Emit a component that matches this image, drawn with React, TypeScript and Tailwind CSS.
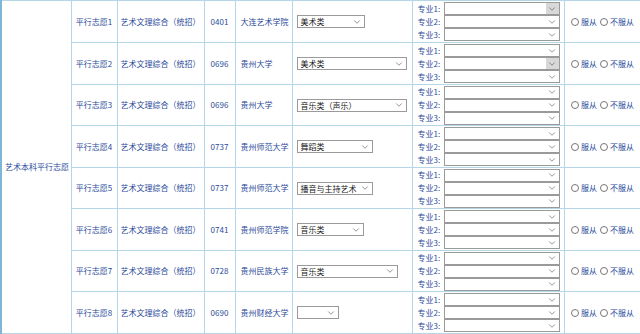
import { FiChevronDown } from "react-icons/fi";

type Row = {
  name: string;
  code: string;
  school: string;
  cat: string;
  selW: string;
  hot?: number;
  h: string;
};

const rows: Row[] = [
  { name: "平行志愿1", code: "0401", school: "大连艺术学院", cat: "美术类", selW: "w-[68px]", hot: 0, h: "h-[42px]" },
  { name: "平行志愿2", code: "0696", school: "贵州大学", cat: "美术类", selW: "w-[110px]", hot: 1, h: "h-[42px]" },
  { name: "平行志愿3", code: "0696", school: "贵州大学", cat: "音乐类（声乐）", selW: "w-[110px]", h: "h-[41px]" },
  { name: "平行志愿4", code: "0737", school: "贵州师范大学", cat: "舞蹈类", selW: "w-[76px]", h: "h-[42px]" },
  { name: "平行志愿5", code: "0737", school: "贵州师范大学", cat: "播音与主持艺术", selW: "w-[76px]", h: "h-[41px]" },
  { name: "平行志愿6", code: "0741", school: "贵州师范学院", cat: "音乐类", selW: "w-[67px]", h: "h-[42px]" },
  { name: "平行志愿7", code: "0728", school: "贵州民族大学", cat: "音乐类", selW: "w-[101px]", h: "h-[41px]" },
  { name: "平行志愿8", code: "0690", school: "贵州财经大学", cat: "", selW: "w-[42px]", h: "h-[42px]" },
];

const cell = "border border-[#b5d6e6] text-center align-middle p-0";

function FakeSelect({ value, width, hot }: { value: string; width: string; hot?: boolean }) {
  return (
    <div className={`flex items-center h-[13px] bg-white border border-[#9a9a9a] ${width}`}>
      <span className="flex-1 pl-[3px] text-left text-[8px] leading-[11px] text-[#222] whitespace-nowrap">
        {value}
      </span>
      <span
        className={`flex items-center justify-center w-[13px] h-full shrink-0 ${hot ? "bg-[#d8d8d8]" : ""}`}
      >
        <FiChevronDown className="w-[10px] h-[10px] text-[#555]" strokeWidth={1.5} />
      </span>
    </div>
  );
}

function Radio({ label }: { label: string }) {
  return (
    <span className="inline-flex items-center gap-[2px]">
      <span className="w-[8px] h-[8px] rounded-full border border-[#777] bg-white" />
      <span>{label}</span>
    </span>
  );
}

export default function App() {
  return (
    <div
      className="w-[640px] h-[334px] bg-white overflow-hidden text-[8px] text-[#2b4a9a]"
      style={{ fontFamily: '"Noto Sans CJK SC", "Noto Sans", sans-serif' }}
    >
      <table className="w-[640px] border-collapse table-fixed border-l-2 border-l-[#7fb6d8]">
        <colgroup>
          <col className="w-[70px]" />
          <col className="w-[46px]" />
          <col className="w-[87px]" />
          <col className="w-[31px]" />
          <col className="w-[57px]" />
          <col className="w-[120px]" />
          <col className="w-[152px]" />
          <col className="w-[77px]" />
        </colgroup>
        <tbody>
          {rows.map((r, i) => (
            <tr key={r.name} className={r.h}>
              {i === 0 && (
                <td rowSpan={8} className={`${cell} text-left pl-[3px] border-l-2 border-l-[#7fb6d8]`}>
                  艺术本科平行志愿
                </td>
              )}
              <td className={cell}>{r.name}</td>
              <td className={cell}>艺术文理综合（统招）</td>
              <td className={cell}>{r.code}</td>
              <td className={`${cell} text-left pl-[5px]`}>{r.school}</td>
              <td className={`${cell} pl-[4px]`}>
                <FakeSelect value={r.cat} width={r.selW} />
              </td>
              <td className={`${cell} pl-[5px]`}>
                <div className="flex flex-col gap-0">
                  {[1, 2, 3].map((n) => (
                    <div key={n} className="flex items-center h-[13px]">
                      <span className="w-[26px] text-left">专业{n}:</span>
                      <FakeSelect value="" width="w-[116px]" hot={r.hot === n - 1} />
                    </div>
                  ))}
                </div>
              </td>
              <td className={cell}>
                <div className="flex items-center justify-center gap-[3px]">
                  <Radio label="服从" />
                  <Radio label="不服从" />
                </div>
              </td>
            </tr>
          ))}
        </tbody>
      </table>
    </div>
  );
}
